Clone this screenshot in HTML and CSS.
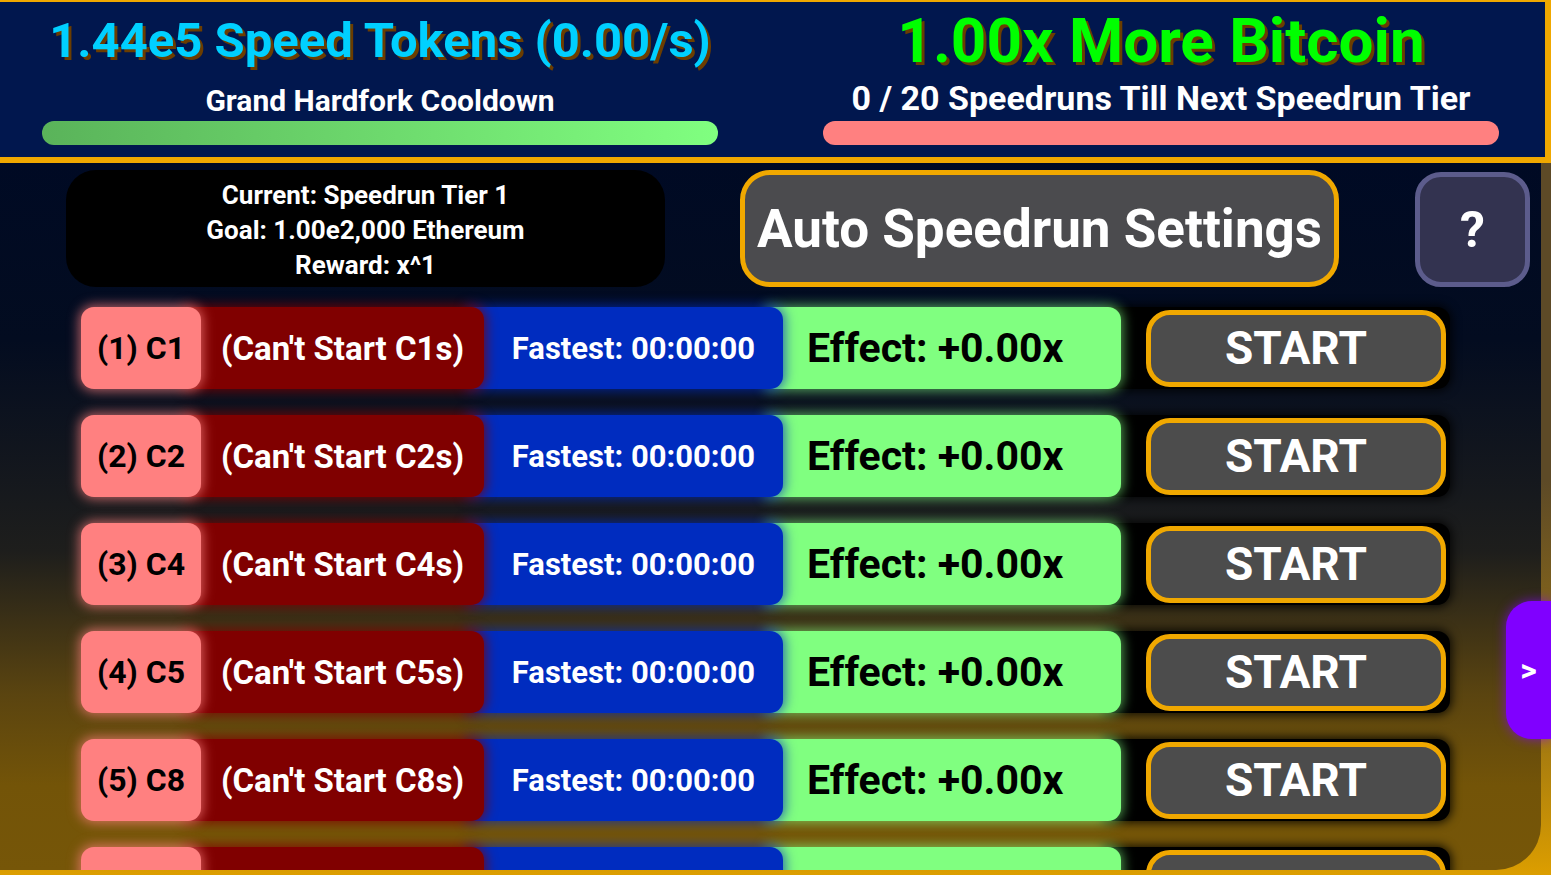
FILE: index.html
```html
<!DOCTYPE html>
<html lang="en">
<head>
    <meta charset="UTF-8">
    <meta name="viewport" content="width=device-width, initial-scale=1.0">
    <title>Speedruns</title>
    <link rel="stylesheet" href="styles.css">
</head>
<body>
    <header class="top-bar">
        <div class="stat stat-left">
            <div class="tokens">1.44e5 Speed Tokens (0.00/s)</div>
            <div class="sub">Grand Hardfork Cooldown</div>
            <div class="bar bar-green"></div>
        </div>
        <div class="stat stat-right">
            <div class="bitcoin">1.00x More Bitcoin</div>
            <div class="sub sub-right">0 / 20 Speedruns Till Next Speedrun Tier</div>
            <div class="bar bar-pink"></div>
        </div>
    </header>

    <main class="panel">
        <div class="controls">
            <div class="tier-info">
                <div>Current: Speedrun Tier 1</div>
                <div>Goal: 1.00e2,000 Ethereum</div>
                <div>Reward: x^1</div>
            </div>
            <button class="auto-btn">Auto Speedrun Settings</button>
            <button class="help-btn">?</button>
        </div>

        <div class="runs">
            <div class="run">
                <div class="cell num">(1) C1</div>
                <div class="cell lock">(Can't Start C1s)</div>
                <div class="cell best">Fastest: 00:00:00</div>
                <div class="cell effect">Effect: +0.00x</div>
                <div class="cell slot"><button class="start-btn">START</button></div>
            </div>
            <div class="run">
                <div class="cell num">(2) C2</div>
                <div class="cell lock">(Can't Start C2s)</div>
                <div class="cell best">Fastest: 00:00:00</div>
                <div class="cell effect">Effect: +0.00x</div>
                <div class="cell slot"><button class="start-btn">START</button></div>
            </div>
            <div class="run">
                <div class="cell num">(3) C4</div>
                <div class="cell lock">(Can't Start C4s)</div>
                <div class="cell best">Fastest: 00:00:00</div>
                <div class="cell effect">Effect: +0.00x</div>
                <div class="cell slot"><button class="start-btn">START</button></div>
            </div>
            <div class="run">
                <div class="cell num">(4) C5</div>
                <div class="cell lock">(Can't Start C5s)</div>
                <div class="cell best">Fastest: 00:00:00</div>
                <div class="cell effect">Effect: +0.00x</div>
                <div class="cell slot"><button class="start-btn">START</button></div>
            </div>
            <div class="run">
                <div class="cell num">(5) C8</div>
                <div class="cell lock">(Can't Start C8s)</div>
                <div class="cell best">Fastest: 00:00:00</div>
                <div class="cell effect">Effect: +0.00x</div>
                <div class="cell slot"><button class="start-btn">START</button></div>
            </div>
            <!-- next row, only its top edge is in view -->
            <div class="run">
                <div class="cell num"></div>
                <div class="cell lock"></div>
                <div class="cell best"></div>
                <div class="cell effect"></div>
                <div class="cell slot"><button class="start-btn"></button></div>
            </div>
        </div>
    </main>

    <div class="side-tab">&gt;</div>
</body>
</html>
```

FILE: styles.css
```css
* {
    box-sizing: border-box;
}
html, body {
    margin: 0;
}
body {
    position: relative;
    width: 1551px;
    height: 875px;
    overflow: hidden;
    font-family: Roboto, "Liberation Sans", sans-serif;
    font-weight: 700;
    background: linear-gradient(to bottom, #5d4a27 0%, #5d4a27 55%, #a47a10 85%, #dc9e00 100%);
}
button {
    font-family: inherit;
    font-weight: 700;
    color: #fff;
    padding: 0;
    cursor: pointer;
}

/* top stats bar */
.top-bar {
    display: grid;
    grid-template-columns: 760px 1fr;
    height: 163px;
    background: #01174e;
    border-top: 2px solid #f0a800;
    border-right: 6px solid #f0a800;
    border-bottom: 6px solid #f0a800;
    color: #fff;
    text-align: center;
}
.stat {
    display: flex;
    flex-direction: column;
    padding-bottom: 12px;
}
.stat-left {
    padding: 11px 42px 12px;
}
.stat-right {
    padding: 7px 46px 12px 63px;
}
.tokens {
    font-size: 49px;
    line-height: 56px;
    color: #00d0ff;
    text-shadow: 3px 3px 0 #6b3d00;
}
.bitcoin {
    font-size: 62px;
    line-height: 64px;
    color: #00ff00;
    text-shadow: 3px 3px 0 #6b3d00;
}
.sub {
    font-size: 30px;
    line-height: 36px;
    margin-top: 14px;
}
.sub-right {
    font-size: 34px;
    line-height: 38px;
    margin-top: 6px;
}
.bar {
    height: 24px;
    margin-top: auto;
    border-radius: 12px;
}
.bar-green {
    background: linear-gradient(to right, #5ab35a, #80ff80);
}
.bar-pink {
    background: #ff8080;
}

/* main panel */
.panel {
    width: 1541px;
    height: 707px;
    padding-top: 7px;
    overflow: hidden;
    border-bottom-right-radius: 45px;
    background: linear-gradient(to bottom, #000a24 0%, #030c20 25%, #1e1e1c 55%, #5a4410 75%, #735408 88%, #765608 100%);
}
.controls {
    display: flex;
    align-items: flex-start;
    height: 117px;
}
.tier-info {
    width: 599px;
    height: 117px;
    margin-left: 66px;
    padding-top: 8px;
    background: #000;
    border-radius: 30px;
    color: #fff;
    font-size: 26px;
    line-height: 35px;
    text-align: center;
}
.auto-btn {
    width: 599px;
    height: 117px;
    margin-left: 75px;
    background: #4b4b4e;
    border: 5px solid #f0a800;
    border-radius: 30px;
    font-size: 53px;
}
.help-btn {
    width: 115px;
    height: 115px;
    margin: 2px 0 0 76px;
    background: #333350;
    border: 5px solid #5c5c8c;
    border-radius: 26px;
    font-size: 50px;
}

/* speedrun rows */
.runs {
    display: flex;
    flex-direction: column;
    gap: 26px;
    margin-top: 20px;
    padding-left: 81px;
}
.run {
    display: flex;
    height: 82px;
    flex-shrink: 0;
}
.cell {
    position: relative;
    display: flex;
    align-items: center;
    justify-content: center;
    flex-shrink: 0;
    margin-left: -16px;
    padding-left: 16px;
    border-radius: 0 13px 13px 0;
    white-space: nowrap;
}
.num {
    width: 120px;
    margin-left: 0;
    padding-left: 0;
    border-radius: 13px;
    background: #ff8080;
    color: #000;
    font-size: 32px;
    z-index: 5;
    box-shadow: 0 0 12px 2px rgba(255, 128, 128, 0.7);
}
.lock {
    width: 299px;
    background: #800000;
    color: #fff;
    font-size: 33px;
    z-index: 4;
    box-shadow: 0 0 12px 2px rgba(128, 0, 0, 0.8);
}
.best {
    width: 315px;
    background: #002cbf;
    color: #fff;
    font-size: 31px;
    z-index: 3;
    box-shadow: 0 0 12px 2px rgba(0, 44, 191, 0.7);
}
.effect {
    width: 354px;
    justify-content: flex-start;
    padding-left: 40px;
    background: #80ff80;
    color: #000;
    font-size: 41px;
    z-index: 2;
    box-shadow: 0 0 12px 2px rgba(128, 255, 128, 0.6);
}
.slot {
    width: 345px;
    justify-content: flex-start;
    padding-left: 41px;
    background: #000;
    z-index: 1;
    box-shadow: 0 0 10px 2px rgba(0, 0, 0, 0.8);
}
.start-btn {
    width: 300px;
    height: 77px;
    background: #4c4c4c;
    border: 5px solid #f0a800;
    border-radius: 24px;
    font-size: 46px;
}

/* tab on the right edge */
.side-tab {
    position: absolute;
    top: 601px;
    right: 0;
    width: 45px;
    height: 138px;
    display: flex;
    align-items: center;
    justify-content: center;
    background: #8000ff;
    border-radius: 26px 0 0 26px;
    box-shadow: 0 0 12px rgba(128, 0, 255, 0.7);
    color: #fff;
    font-size: 32px;
}
```
